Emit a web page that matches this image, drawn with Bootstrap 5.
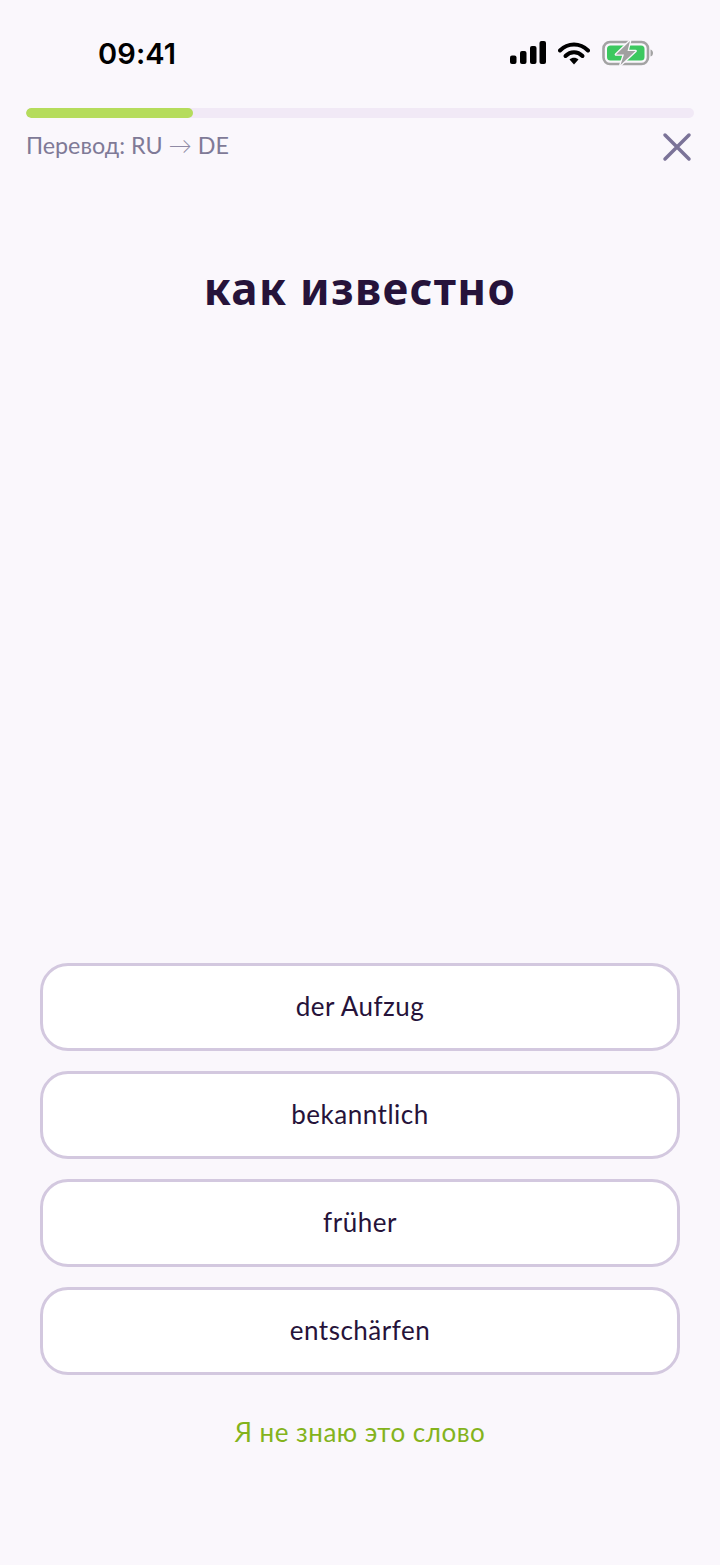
<!DOCTYPE html>
<html lang="ru">
<head>
<meta charset="utf-8">
<title>Перевод</title>
<link rel="stylesheet" href="https://cdn.jsdelivr.net/npm/bootstrap@5.3.0/dist/css/bootstrap.min.css">
<style>
html,body{height:100%}
body{background:#faf7fc;font-family:"Lato","Noto Sans",sans-serif;color:#241533;width:720px;height:1565px;overflow:hidden}
.screen-wrap{height:1565px}
.status-row{height:108px;padding:38px 66px 0 98px;align-items:flex-start}
.clock{font-family:Inter,sans-serif;font-weight:600;font-size:29px;line-height:31px;color:#000;letter-spacing:.1px}
.status-icons{gap:12px;padding-top:2px}
.head-block{padding:0 26px}
.prog-track{height:10px;background:#f1e9f6;border-radius:5px}
.prog-track .progress-bar{background:#b5dc5c;border-radius:5px}
.meta-row{margin-top:12px;height:30px}
.meta-label{font-size:23.300px;line-height:30px;color:#7f7a97}
.arrow-glyph{font-weight:300;color:#8f8aa5}
.close-x{display:block;margin-right:2px;margin-top:4px}
.word-title{margin-top:101px;font-size:44px;line-height:54px;font-weight:700;color:#26133a;text-align:center;font-family:"Noto Sans",sans-serif;letter-spacing:1.300px}
.answers{padding:0 40px;gap:20px;margin-top:648px}
.answer-btn{height:88px;border:3px solid #d3c8df;border-radius:28px;background:#fff;color:#26133a;font-size:26px;letter-spacing:.5px;display:flex;align-items:center;justify-content:center;padding:0 0 2px}
.answer-btn:hover{background:#fff;border-color:#d3c8df;color:#26133a}
.skip-link{margin-top:39px;display:block;text-align:center;font-size:26px;line-height:36px;color:#84b31c;text-decoration:none;letter-spacing:.5px}
</style>
</head>
<body>
<div class="screen-wrap d-flex flex-column">
  <div class="status-row d-flex justify-content-between">
    <span class="clock">09:41</span>
    <div class="status-icons d-flex align-items-center">
      <svg width="36" height="24" viewBox="0 0 36 24"><rect x="0" y="14.500" width="6.500" height="8.500" rx="2" fill="#000"/><rect x="10" y="10" width="6.500" height="13" rx="2" fill="#000"/><rect x="20" y="5" width="6.500" height="18" rx="2" fill="#000"/><rect x="29.500" y="0" width="6.500" height="23" rx="2" fill="#000"/></svg>
      <svg width="32" height="24" viewBox="0 0 32 24" fill="none"><path d="M2 9.500C10 1.500 22 1.500 30 9.500" stroke="#000" stroke-width="4" stroke-linecap="round"/><path d="M7.500 15C12.500 10 19.500 10 24.500 15" stroke="#000" stroke-width="4" stroke-linecap="round"/><path d="M11.500 18.500C14 16 18 16 20.500 18.500L16 23.500Z" fill="#000"/></svg>
      <svg width="52" height="26" viewBox="0 0 52 26" fill="none"><rect x="1.500" y="2" width="44.500" height="22" rx="6.500" stroke="#a3a3a3" stroke-width="2.600"/><rect x="5" y="5.500" width="37.500" height="15" rx="3.500" fill="#3cc85f"/><path d="M48.500 9.500c1.800.5 2.500 2 2.500 3.500s-.7 3-2.500 3.500Z" fill="#a3a3a3"/><path d="M28 1 14 14.500h8l-3.500 10.500 15-14h-8l2.500-10Z" fill="#a0a0a0" stroke="#faf7fc" stroke-width="2.600" stroke-linejoin="round" paint-order="stroke"/></svg>
    </div>
  </div>
  <div class="head-block">
    <div class="progress prog-track" role="progressbar" aria-valuenow="25" aria-valuemin="0" aria-valuemax="100">
      <div class="progress-bar" style="width:25%"></div>
    </div>
    <div class="meta-row d-flex justify-content-between align-items-center">
      <span class="meta-label">Перевод: RU <span class="arrow-glyph">→</span> DE</span>
      <svg class="close-x" width="30" height="30" viewBox="0 0 30 30" fill="none"><path d="M3 3 27 27M27 3 3 27" stroke="#7b7398" stroke-width="3.500" stroke-linecap="round"/></svg>
    </div>
  </div>
  <h1 class="word-title mb-0">как известно</h1>
  <div class="answers d-flex flex-column">
    <button type="button" class="btn answer-btn">der Aufzug</button>
    <button type="button" class="btn answer-btn">bekanntlich</button>
    <button type="button" class="btn answer-btn">früher</button>
    <button type="button" class="btn answer-btn">entschärfen</button>
  </div>
  <a class="skip-link" href="#">Я не знаю это слово</a>
</div>
<script src="https://cdn.jsdelivr.net/npm/bootstrap@5.3.0/dist/js/bootstrap.bundle.min.js"></script>
</body>
</html>
